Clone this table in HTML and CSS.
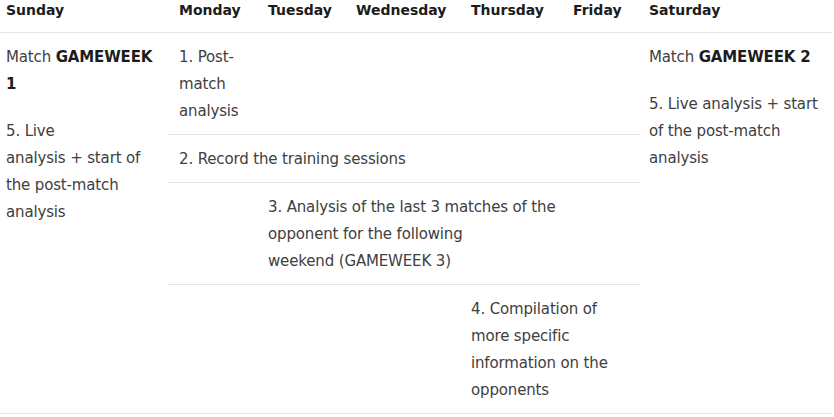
FILE: index.html
```html
<!DOCTYPE html>
<html lang="en">
<head>
<meta charset="utf-8">
<title>Weekly analysis plan</title>
<link rel="stylesheet" href="styles.css">
</head>
<body>
<table class="plan">
  <colgroup>
    <col class="c-sun">
    <col class="c-mon">
    <col class="c-tue">
    <col class="c-wed">
    <col class="c-thu">
    <col class="c-fri">
    <col class="c-sat">
  </colgroup>
  <thead>
    <tr>
      <th class="first">Sunday</th>
      <th class="mon">Monday</th>
      <th>Tuesday</th>
      <th>Wednesday</th>
      <th>Thursday</th>
      <th>Friday</th>
      <th class="sat">Saturday</th>
    </tr>
  </thead>
  <tbody>
    <tr>
      <td class="first" rowspan="4">
        <p>Match <strong>GAMEWEEK</strong><br><strong>1</strong></p>
        <p>5. Live<br>analysis + start of<br>the post-match<br>analysis</p>
      </td>
      <td class="mon">1. Post-<br>match<br>analysis</td>
      <td></td>
      <td></td>
      <td></td>
      <td></td>
      <td class="sat" rowspan="4">
        <p>Match <strong>GAMEWEEK 2</strong></p>
        <p>5. Live analysis + start<br>of the post-match<br>analysis</p>
      </td>
    </tr>
    <tr>
      <td class="mon" colspan="5">2. Record the training sessions</td>
    </tr>
    <tr>
      <td></td>
      <td colspan="3">3. Analysis of the last 3 matches of the<br>opponent for the following<br>weekend (GAMEWEEK 3)</td>
      <td></td>
    </tr>
    <tr>
      <td></td>
      <td></td>
      <td></td>
      <td colspan="2">4. Compilation of<br>more specific<br>information on the<br>opponents</td>
    </tr>
  </tbody>
</table>
</body>
</html>
```
FILE: styles.css
```css
html, body {
  margin: 0;
  padding: 0;
  background: #ffffff;
}

.plan {
  width: 832px;
  table-layout: fixed;
  border-collapse: separate;
  border-spacing: 0;
  font-family: "DejaVu Sans", "Liberation Sans", sans-serif;
  font-size: 15px;
  letter-spacing: -0.15px;
  color: #404040;
}

.c-sun { width: 168px; }
.c-mon { width: 90px; }
.c-tue { width: 88px; }
.c-wed { width: 115px; }
.c-thu { width: 102px; }
.c-fri { width: 77px; }
.c-sat { width: 192px; }

.plan th {
  text-align: left;
  font-weight: 700;
  font-size: 14px;
  letter-spacing: 0;
  line-height: 20px;
  color: #1c1c1c;
  padding: 0 10px 12px;
  border-bottom: 1px solid #e6e6e6;
  white-space: nowrap;
}

.plan td {
  vertical-align: top;
  line-height: 27px;
  padding: 11px 10px 9px;
  border-bottom: 1px solid #e6e6e6;
  white-space: nowrap;
}

.plan .first {
  padding-left: 6px;
}

.plan .mon {
  padding-left: 11px;
}

.plan .sat {
  padding-left: 9px;
}

.plan p {
  margin: 0 0 20px;
}

.plan p:last-child {
  margin-bottom: 0;
}

.plan strong {
  font-weight: 700;
  color: #1c1c1c;
}
```
